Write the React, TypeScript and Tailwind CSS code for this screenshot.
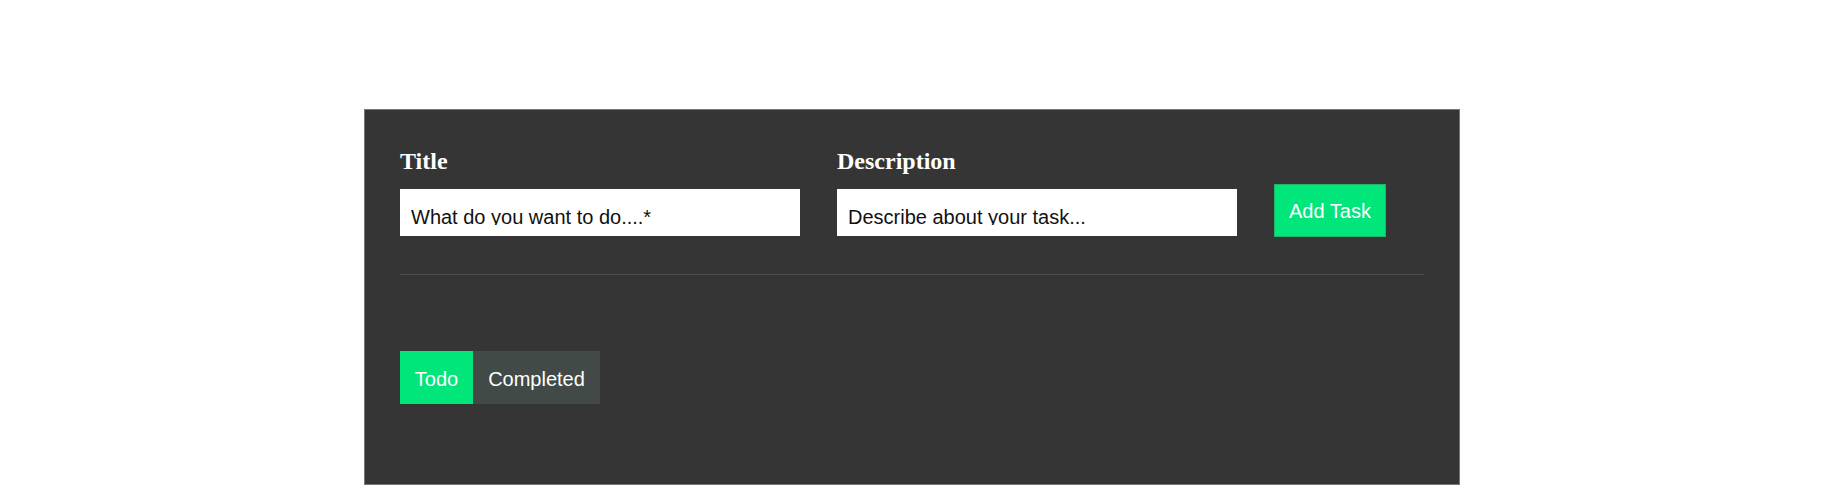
import { useState } from 'react';

const sans = { fontFamily: '"Liberation Sans", Arial, sans-serif' };

const Field: React.FC<{ label: string; placeholder: string; value: string; onChange: (v: string) => void }> = ({
  label,
  placeholder,
  value,
  onChange,
}) => (
  <div className="flex w-[400px] flex-col">
    <label className="mb-[14px] font-['Liberation_Serif',serif] text-[24px] leading-[28px] font-bold text-white">
      {label}
    </label>
    {/* white box is 47px, the input inside is shorter so descenders get cut like the original */}
    <div className="h-[47px] w-[400px] bg-white">
      <input
        className="box-border block h-[36px] w-full border-0 bg-transparent pt-[20px] pr-[10px] pb-0 pl-[11px] font-['Liberation_Sans',Arial,sans-serif] text-[20px] leading-[16px] text-black outline-none placeholder:text-[#111]"
        placeholder={placeholder}
        value={value}
        onChange={e => onChange(e.target.value)}
      />
    </div>
  </div>
);

export default function App() {
  const [title, setTitle] = useState('');
  const [desc, setDesc] = useState('');
  const [tab, setTab] = useState<'todo' | 'completed'>('todo');

  return (
    <div className="min-h-[486px] bg-white pt-[109px]" style={sans}>
      <div className="mx-auto box-border w-[1096px] border border-[#777] bg-[#353535] px-[35px] pt-[37px] pb-[80px]">
        <div className="flex items-end gap-[37px]">
          <Field label="Title" placeholder="What do you want to do....*" value={title} onChange={setTitle} />
          <Field label="Description" placeholder="Describe about your task..." value={desc} onChange={setDesc} />
          <button className="relative top-[1px] border border-[#1fb56d] bg-[#00e67a] px-[14px] pt-[15px] pb-[13px] text-[20px] leading-[23px] text-white">
            Add Task
          </button>
        </div>

        <div className="mt-[38px] h-px w-full bg-[#4d4d4d]" />

        <div className="mt-[76px] flex">
          <button
            onClick={() => setTab('todo')}
            className={`w-[73px] pt-[17px] pb-[13px] text-[20px] leading-[23px] text-white ${tab === 'todo' ? 'bg-[#00e67a]' : 'bg-[#414a46]'}`}
          >
            Todo
          </button>
          <button
            onClick={() => setTab('completed')}
            className={`w-[127px] pt-[17px] pb-[13px] text-[20px] leading-[23px] text-white ${tab === 'completed' ? 'bg-[#00e67a]' : 'bg-[#414a46]'}`}
          >
            Completed
          </button>
        </div>
      </div>
    </div>
  );
}
